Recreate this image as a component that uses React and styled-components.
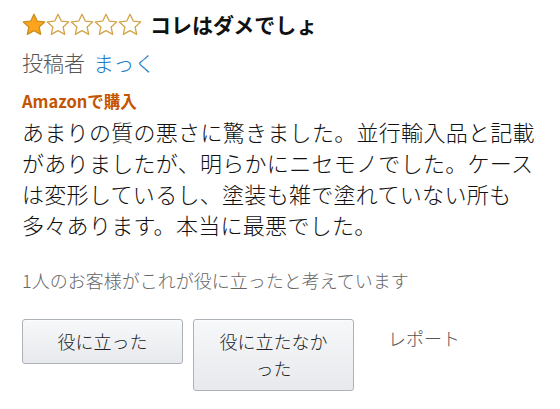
import styled, { createGlobalStyle } from 'styled-components';

const GlobalStyle = createGlobalStyle`
    body {
        margin: 0;
        background: #fff;
        font-family: "Noto Sans CJK JP", "Noto Sans", sans-serif;
    }
`

const Review = styled.div`
    padding: 9px 22px;
`

const Header = styled.div`
    display: flex;
    align-items: center;
    height: 30px;
    gap: 8px;
`

const Stars = styled.div`
    display: flex;
    gap: 0;
`

const Title = styled.h2`
    margin: 0;
    font-size: 21px;
    font-weight: bold;
    color: #111;
    line-height: 30px;
`

const Author = styled.div`
    margin-top: 8px;
    font-size: 21px;
    line-height: 30px;
    color: #555;
    font-weight: 300;
`

const AuthorName = styled.span`
    color: #1a7bc9;
    margin-left: 8px;
`

const Purchase = styled.div`
    margin-top: 14px;
    font-size: 16.5px;
    line-height: 20px;
    font-weight: bold;
    color: #c45500;
`

const Body = styled.p`
    margin: 5px 0 0;
    font-size: 22px;
    font-weight: 300;
    letter-spacing: 0.3px;
    line-height: 31px;
    color: #111;
`

const Helpful = styled.div`
    margin-top: 28px;
    font-size: 18px;
    font-weight: 300;
    line-height: 24px;
    color: #666;
`

const Actions = styled.div`
    margin-top: 27px;
    display: flex;
    align-items: flex-start;
    gap: 10px;
`

const VoteButton = styled.button`
    width: 161px;
    min-height: 44px;
    padding: 8px 24px;
    font-family: inherit;
    font-size: 18px;
    font-weight: 300;
    line-height: 27px;
    line-break: loose;
    color: #222;
    background: linear-gradient(#f7f8fa, #e7e9ec);
    border: 1px solid #adb1b8;
    border-radius: 3px;
    box-shadow: 0 1px 0 rgba(255, 255, 255, 0.6) inset;
`

const Report = styled.span`
    margin-left: 24px;
    margin-top: 6px;
    font-size: 18px;
    font-weight: 300;
    color: #555;
`

const Star = ({ filled }) => (
    <svg width="24" height="23" viewBox="0 0 24 23">
        <path
            d="M12 1.2l3.2 6.9 7.5.8-5.6 5.1 1.6 7.4L12 17.6l-6.7 3.8 1.6-7.4-5.6-5.1 7.5-.8z"
            fill={filled ? '#ffa41c' : '#fff'}
            stroke={filled ? '#c8901d' : '#d2a54a'}
            strokeWidth="1.3"
            strokeLinejoin="round"
        />
    </svg>
)

const App = () => {
    return (
        <Review>
            <GlobalStyle />
            <Header>
                <Stars>
                    {[1, 2, 3, 4, 5].map(n => <Star key={n} filled={n <= 1} />)}
                </Stars>
                <Title>コレはダメでしょ</Title>
            </Header>
            <Author>
                投稿者<AuthorName>まっく</AuthorName>
            </Author>
            <Purchase>Amazonで購入</Purchase>
            <Body>
                あまりの質の悪さに驚きました。並行輸入品と記載がありましたが、明らかにニセモノでした。ケースは変形しているし、塗装も雑で塗れていない所も多々あります。本当に最悪でした。
            </Body>
            <Helpful>1人のお客様がこれが役に立ったと考えています</Helpful>
            <Actions>
                <VoteButton>役に立った</VoteButton>
                <VoteButton>役に立たなかった</VoteButton>
                <Report>レポート</Report>
            </Actions>
        </Review>
    )
}

export default App
